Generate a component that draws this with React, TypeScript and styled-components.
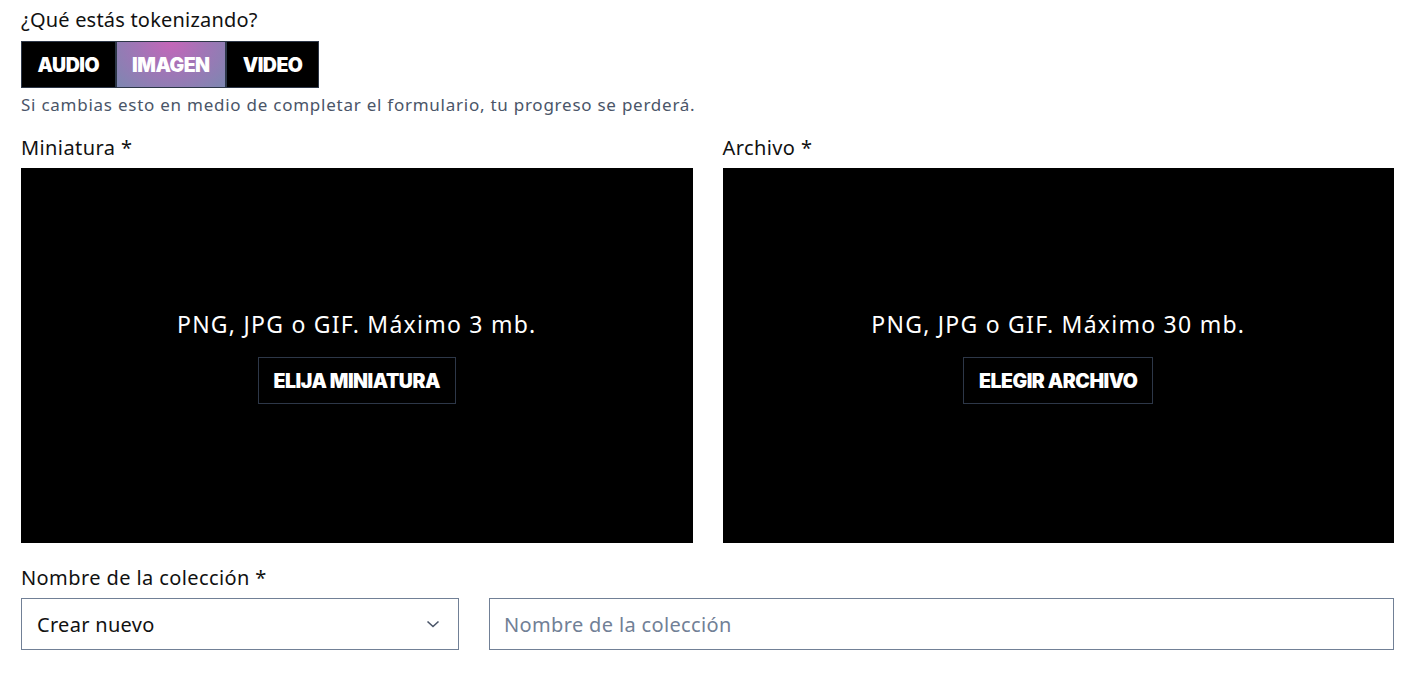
import { useState } from "react";
import styled, { createGlobalStyle } from "styled-components";

const GlobalStyle = createGlobalStyle`
    body {
        margin: 0;
        background: #fff;
        font-family: "Noto Sans", "Open Sans", sans-serif;
        color: #000;
    }
`;

const Form = styled.div`
    padding: 8px 19px 0 21px;
    display: flex;
    flex-direction: column;
`;

const Label = styled.label<{ $spacing?: number }>`
    display: block;
    font-size: 20px;
    line-height: 24px;
    letter-spacing: ${(p) => p.$spacing ?? 0.4}px;
    color: #111;
`;

const TypeTabs = styled.div`
    display: flex;
    align-self: flex-start;
    margin-top: 9px;
    border: 1px solid #2d3748;
`;

const Tab = styled.button<{ $active?: boolean }>`
    height: 45px;
    padding: 0 15.5px;
    border: none;
    border-left: ${(p) => (p.$active ? "2px solid #2d3748" : "none")};
    border-right: ${(p) => (p.$active ? "2px solid #2d3748" : "none")};
    background: ${(p) =>
        p.$active
            ? "radial-gradient(ellipse at 50% 0%, #c566b9 0%, #a175b6 45%, #7d87b1 100%)"
            : "#000"};
    color: #fff;
    font-family: "Inter", sans-serif;
    font-weight: 900;
    font-size: 19.5px;
    letter-spacing: -0.5px;
    cursor: pointer;
`;

const Hint = styled.p`
    margin: 6px 0 0;
    font-size: 17px;
    line-height: 22px;
    letter-spacing: 0.75px;
    color: #4a5568;
`;

const UploadRow = styled.div`
    display: grid;
    grid-template-columns: 1fr 1fr;
    gap: 30px;
    margin-top: 20px;
`;

const Field = styled.div`
    display: flex;
    flex-direction: column;
    gap: 8px;
`;

const DropZone = styled.div`
    height: 375px;
    background: #000;
    display: flex;
    flex-direction: column;
    align-items: center;
    justify-content: center;
    gap: 18px;
    padding-top: 2px;
    box-sizing: border-box;
`;

const DropText = styled.span`
    color: #fff;
    font-size: 23px;
    line-height: 30px;
    letter-spacing: 1.25px;
`;

const PickButton = styled.button`
    height: 47px;
    padding: 0 15px;
    background: #000;
    border: 1px solid #2d3748;
    color: #fff;
    font-family: "Inter", sans-serif;
    font-weight: 900;
    font-size: 19.5px;
    letter-spacing: -0.5px;
    cursor: pointer;
`;

const CollectionLabel = styled(Label)`
    margin-top: 23px;
`;

const CollectionRow = styled.div`
    display: grid;
    grid-template-columns: 438px 1fr;
    gap: 30px;
    margin-top: 8px;
`;

const SelectBox = styled.div`
    height: 52px;
    border: 1px solid #718096;
    box-sizing: border-box;
    display: flex;
    align-items: center;
    justify-content: space-between;
    padding: 0 17px 0 15px;
    font-size: 20px;
    letter-spacing: 0.3px;
    color: #111;
`;

const TextInput = styled.input`
    height: 52px;
    border: 1px solid #718096;
    box-sizing: border-box;
    padding: 0 14px;
    font-family: "Noto Sans", sans-serif;
    font-size: 20px;
    letter-spacing: 0.35px;
    outline: none;
    &::placeholder {
        color: #718096;
    }
`;

function Chevron() {
    return (
        <svg width="16" height="16" viewBox="0 0 16 16" fill="none">
            <path d="M2.5 5.5 L8 10.5 L13.5 5.5" stroke="#4a5568" strokeWidth="1.6" />
        </svg>
    );
}

const types = ["AUDIO", "IMAGEN", "VIDEO"];

export default function App() {
    const [type, setType] = useState("IMAGEN");

    return (
        <>
            <GlobalStyle />
            <Form>
                <Label $spacing={0.2}>¿Qué estás tokenizando?</Label>
                <TypeTabs>
                    {types.map((t) => (
                        <Tab key={t} $active={t === type} onClick={() => setType(t)}>
                            {t}
                        </Tab>
                    ))}
                </TypeTabs>
                <Hint>Si cambias esto en medio de completar el formulario, tu progreso se perderá.</Hint>
                <UploadRow>
                    <Field>
                        <Label>Miniatura *</Label>
                        <DropZone>
                            <DropText>PNG, JPG o GIF. Máximo 3 mb.</DropText>
                            <PickButton>ELIJA MINIATURA</PickButton>
                        </DropZone>
                    </Field>
                    <Field>
                        <Label>Archivo *</Label>
                        <DropZone>
                            <DropText>PNG, JPG o GIF. Máximo 30 mb.</DropText>
                            <PickButton>ELEGIR ARCHIVO</PickButton>
                        </DropZone>
                    </Field>
                </UploadRow>
                <CollectionLabel>Nombre de la colección *</CollectionLabel>
                <CollectionRow>
                    <SelectBox>
                        <span>Crear nuevo</span>
                        <Chevron />
                    </SelectBox>
                    <TextInput placeholder="Nombre de la colección" />
                </CollectionRow>
            </Form>
        </>
    );
}
